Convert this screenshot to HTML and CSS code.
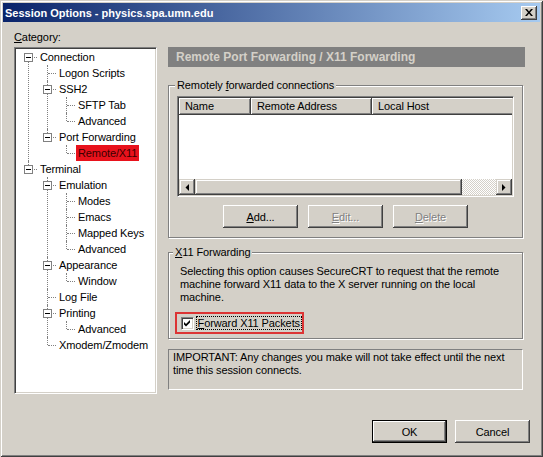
FILE: index.html
```html
<!DOCTYPE html>
<html>
<head>
<meta charset="utf-8">
<title>Session Options</title>
<link rel="stylesheet" href="styles.css">
</head>
<body>
<div class="window">
  <div class="titlebar">
    <span class="title">Session Options - physics.spa.umn.edu</span>
    <button class="close" type="button"><svg width="8" height="7" viewBox="0 0 8 7"><path d="M0 0h2l2 2.4L6 0h2L5 3.5 8 7H6L4 4.6 2 7H0l3-3.5z" fill="#000"/></svg></button>
  </div>
  <div class="content">
    <div class="left">
      <div class="cat-label"><u>C</u>ategory:</div>
      <div class="tree-box">
        <ul class="tree">
          <li><span class="node"><span class="toggle"></span><span class="label">Connection</span></span>
            <ul>
              <li><span class="node leaf"><span class="label">Logon Scripts</span></span></li>
              <li><span class="node"><span class="toggle"></span><span class="label">SSH2</span></span>
                <ul>
                  <li><span class="node leaf"><span class="label">SFTP Tab</span></span></li>
                  <li><span class="node leaf"><span class="label">Advanced</span></span></li>
                </ul>
              </li>
              <li><span class="node"><span class="toggle"></span><span class="label">Port Forwarding</span></span>
                <ul>
                  <li><span class="node leaf"><span class="label selected">Remote/X11</span></span></li>
                </ul>
              </li>
            </ul>
          </li>
          <li><span class="node"><span class="toggle"></span><span class="label">Terminal</span></span>
            <ul>
              <li><span class="node"><span class="toggle"></span><span class="label">Emulation</span></span>
                <ul>
                  <li><span class="node leaf"><span class="label">Modes</span></span></li>
                  <li><span class="node leaf"><span class="label">Emacs</span></span></li>
                  <li><span class="node leaf"><span class="label">Mapped Keys</span></span></li>
                  <li><span class="node leaf"><span class="label">Advanced</span></span></li>
                </ul>
              </li>
              <li><span class="node"><span class="toggle"></span><span class="label">Appearance</span></span>
                <ul>
                  <li><span class="node leaf"><span class="label">Window</span></span></li>
                </ul>
              </li>
              <li><span class="node leaf"><span class="label">Log File</span></span></li>
              <li><span class="node"><span class="toggle"></span><span class="label">Printing</span></span>
                <ul>
                  <li><span class="node leaf"><span class="label">Advanced</span></span></li>
                </ul>
              </li>
              <li><span class="node leaf"><span class="label">Xmodem/Zmodem</span></span></li>
            </ul>
          </li>
        </ul>
      </div>
    </div>
    <div class="right">
      <div class="header">Remote Port Forwarding / X11 Forwarding</div>
      <fieldset class="group g1">
        <legend>Remotely <u>f</u>orwarded connections</legend>
        <div class="listview">
          <div class="lv-head">
            <div class="col c-name">Name</div>
            <div class="col c-remote">Remote Address</div>
            <div class="col c-local">Local Host</div>
          </div>
          <div class="lv-body"></div>
          <div class="hscroll">
            <div class="sb-btn"><svg width="4" height="7" viewBox="0 0 4 7"><path d="M4 0v7L0.5 3.5z" fill="#000"/></svg></div>
            <div class="sb-thumb"></div>
            <div class="sb-track"></div>
            <div class="sb-btn"><svg width="4" height="7" viewBox="0 0 4 7"><path d="M0 0v7l3.5-3.5z" fill="#000"/></svg></div>
          </div>
        </div>
        <div class="btn-row">
          <button class="btn" type="button"><u>A</u>dd...</button>
          <button class="btn" type="button" disabled><u>E</u>dit...</button>
          <button class="btn" type="button" disabled><u>D</u>elete</button>
        </div>
      </fieldset>
      <fieldset class="group g2">
        <legend><u>X</u>11 Forwarding</legend>
        <p class="desc">Selecting this option causes SecureCRT to request that the remote<br>machine forward X11 data to the X server running on the local<br>machine.</p>
        <div class="mark">
          <span class="checkbox"><svg width="7" height="7" viewBox="0 0 7 7"><path d="M0 2l2 2 4-4v2.6L2 6.6 0 4.6z" fill="#000"/></svg></span>
          <span class="focus"><u>F</u>orward X11 Packets</span>
        </div>
      </fieldset>
      <div class="notice">IMPORTANT: Any changes you make will not take effect until the next<br>time this session connects.</div>
    </div>
  </div>
  <div class="footer">
    <button class="btn default" type="button">OK</button>
    <button class="btn" type="button">Cancel</button>
  </div>
</div>
</body>
</html>
```
FILE: styles.css
```css
html, body {
  margin: 0;
  padding: 0;
  background: #d4d0c8;
}

body {
  font-family: "Liberation Sans", Arial, sans-serif;
  font-size: 11px;
  letter-spacing: -0.1px;
  color: #000;
}

.window {
  width: 543px;
  height: 457px;
  box-sizing: border-box;
  padding: 3px;
  background: #d4d0c8;
  box-shadow: inset 1px 1px 0 #d4d0c8, inset -1px -1px 0 #404040, inset 2px 2px 0 #fff, inset -2px -2px 0 #808080;
  display: flex;
  flex-direction: column;
}

.titlebar {
  height: 19px;
  display: flex;
  align-items: center;
  justify-content: space-between;
  padding: 0 3px 0 2px;
  background: linear-gradient(to right, #0a246a, #a6caf0);
}

.title {
  color: #fff;
  font-weight: bold;
  font-size: 11px;
  letter-spacing: 0;
}

.close {
  width: 16px;
  height: 14px;
  padding: 0;
  border: 0;
  background: #d4d0c8;
  box-shadow: inset -1px -1px 0 #404040, inset 1px 1px 0 #fff, inset -2px -2px 0 #808080;
  display: flex;
  align-items: center;
  justify-content: center;
}

.close svg {
  display: block;
  margin: -1px 0 0 0;
}

.content {
  display: flex;
  padding: 9px 0 0 11px;
}

.left {
  width: 143px;
}

.cat-label {
  height: 13px;
  line-height: 13px;
  margin-bottom: 3px;
}

.tree-box {
  height: 347px;
  box-sizing: border-box;
  background: #fff;
  border: 1px solid;
  border-color: #808080 #fff #fff #808080;
  box-shadow: inset 1px 1px 0 #404040, inset -1px -1px 0 #d4d0c8;
  padding: 1px;
  overflow: hidden;
}

.tree, .tree ul {
  list-style: none;
  margin: 0;
  padding: 0;
}

.tree ul {
  padding-left: 19px;
}

.tree li {
  position: relative;
}

.tree li::before {
  content: "";
  position: absolute;
  left: 12px;
  top: 0;
  bottom: 0;
  border-left: 1px dotted #808080;
}

.tree li:last-child::before {
  bottom: auto;
  height: 8px;
}

.tree > li:first-child::before {
  top: 8px;
}

.node {
  display: block;
  position: relative;
  height: 16px;
  line-height: 16px;
  padding-left: 22px;
  white-space: nowrap;
}

.node::before {
  content: "";
  position: absolute;
  left: 13px;
  top: 8px;
  width: 8px;
  border-top: 1px dotted #808080;
}

.toggle {
  position: absolute;
  left: 8px;
  top: 4px;
  width: 9px;
  height: 9px;
  box-sizing: border-box;
  border: 1px solid #808080;
  background: #fff;
  z-index: 1;
}

.toggle::after {
  content: "";
  position: absolute;
  left: 1px;
  top: 3px;
  width: 5px;
  height: 1px;
  background: #000;
}

.label {
  display: inline-block;
  padding: 0 2px;
  height: 16px;
}

.label.selected {
  background: #e8121c;
  color: #3a0000;
}

.right {
  margin-left: 11px;
  margin-top: 16px;
  width: 357px;
}

.header {
  height: 20px;
  line-height: 20px;
  background: #808080;
  color: #d4d0c8;
  font-weight: bold;
  font-size: 12px;
  letter-spacing: 0;
  padding-left: 8px;
}

.group {
  width: 355px;
  box-sizing: border-box;
  margin: 0;
  min-width: 0;
  border: 1px solid #808080;
  box-shadow: 1px 1px 0 #fff, inset 1px 1px 0 #fff;
}

.group legend {
  height: 13px;
  line-height: 13px;
  padding: 0 2px;
  margin-left: -2px;
  background: #d4d0c8;
}

.g1 {
  margin-top: 12px;
  padding: 4px 8px 9px 8px;
}

.listview {
  height: 101px;
  box-sizing: border-box;
  border: 1px solid;
  border-color: #808080 #fff #fff #808080;
  box-shadow: inset 1px 1px 0 #404040, inset -1px -1px 0 #d4d0c8;
  padding: 1px;
  background: #fff;
  display: flex;
  flex-direction: column;
  overflow: hidden;
}

.lv-head {
  display: flex;
  height: 17px;
  flex: none;
  overflow: hidden;
}

.col {
  flex: none;
  box-sizing: border-box;
  height: 17px;
  line-height: 16px;
  padding-left: 6px;
  background: #d4d0c8;
  box-shadow: inset -1px -1px 0 #404040, inset 1px 1px 0 #fff, inset -2px -2px 0 #808080;
  white-space: nowrap;
}

.c-name { width: 72px; }
.c-remote { width: 121px; }
.c-local { width: 200px; }

.lv-body {
  flex: 1;
  background: #fff;
}

.hscroll {
  flex: none;
  display: flex;
  height: 16px;
}

.sb-btn {
  width: 16px;
  height: 16px;
  box-sizing: border-box;
  background: #d4d0c8;
  box-shadow: inset -1px -1px 0 #404040, inset 1px 1px 0 #d4d0c8, inset -2px -2px 0 #808080, inset 2px 2px 0 #fff;
  display: flex;
  align-items: center;
  justify-content: center;
}

.sb-thumb {
  width: 267px;
  height: 16px;
  background: #d4d0c8;
  box-shadow: inset -1px -1px 0 #404040, inset 1px 1px 0 #d4d0c8, inset -2px -2px 0 #808080, inset 2px 2px 0 #fff;
}

.sb-track {
  flex: 1;
  background: repeating-conic-gradient(#d4d0c8 0 25%, #fff 0 50%) 0 0 / 2px 2px;
}

.btn-row {
  display: flex;
  justify-content: center;
  gap: 10px;
  margin-top: 8px;
}

.btn {
  width: 75px;
  height: 23px;
  box-sizing: border-box;
  padding: 0;
  border: 0;
  margin: 0;
  font: inherit;
  letter-spacing: inherit;
  color: #000;
  background: #d4d0c8;
  box-shadow: inset -1px -1px 0 #404040, inset 1px 1px 0 #fff, inset -2px -2px 0 #808080;
}

.btn:disabled {
  color: #808080;
  text-shadow: 1px 1px 0 #fff;
}

.btn.default {
  border: 1px solid #000;
}

.g2 {
  margin-top: 8px;
  padding: 6px 8px 4px 6px;
}

.desc {
  margin: 0 0 0 5px;
  line-height: 13px;
  white-space: nowrap;
}

.mark {
  display: flex;
  align-items: center;
  width: 129px;
  height: 22px;
  box-sizing: border-box;
  margin-top: 8px;
  border: 2px solid #dc3434;
  padding-left: 4px;
}

.checkbox {
  width: 13px;
  height: 13px;
  box-sizing: border-box;
  background: #fff;
  border: 1px solid;
  border-color: #808080 #fff #fff #808080;
  box-shadow: inset 1px 1px 0 #404040, inset -1px -1px 0 #d4d0c8;
  display: flex;
  align-items: center;
  justify-content: center;
}

.checkbox svg {
  display: block;
}

.focus {
  margin-left: 2px;
  padding: 0 1px;
  line-height: 12px;
  border: 1px dotted #000;
  white-space: nowrap;
}

.notice {
  width: 355px;
  height: 41px;
  box-sizing: border-box;
  margin-top: 10px;
  border: 1px solid;
  border-color: #808080 #fff #fff #808080;
  padding: 1px 0 0 4px;
  line-height: 13px;
  white-space: nowrap;
}

.footer {
  display: flex;
  justify-content: flex-end;
  gap: 8px;
  margin-top: 26px;
  padding-right: 10px;
}
```
